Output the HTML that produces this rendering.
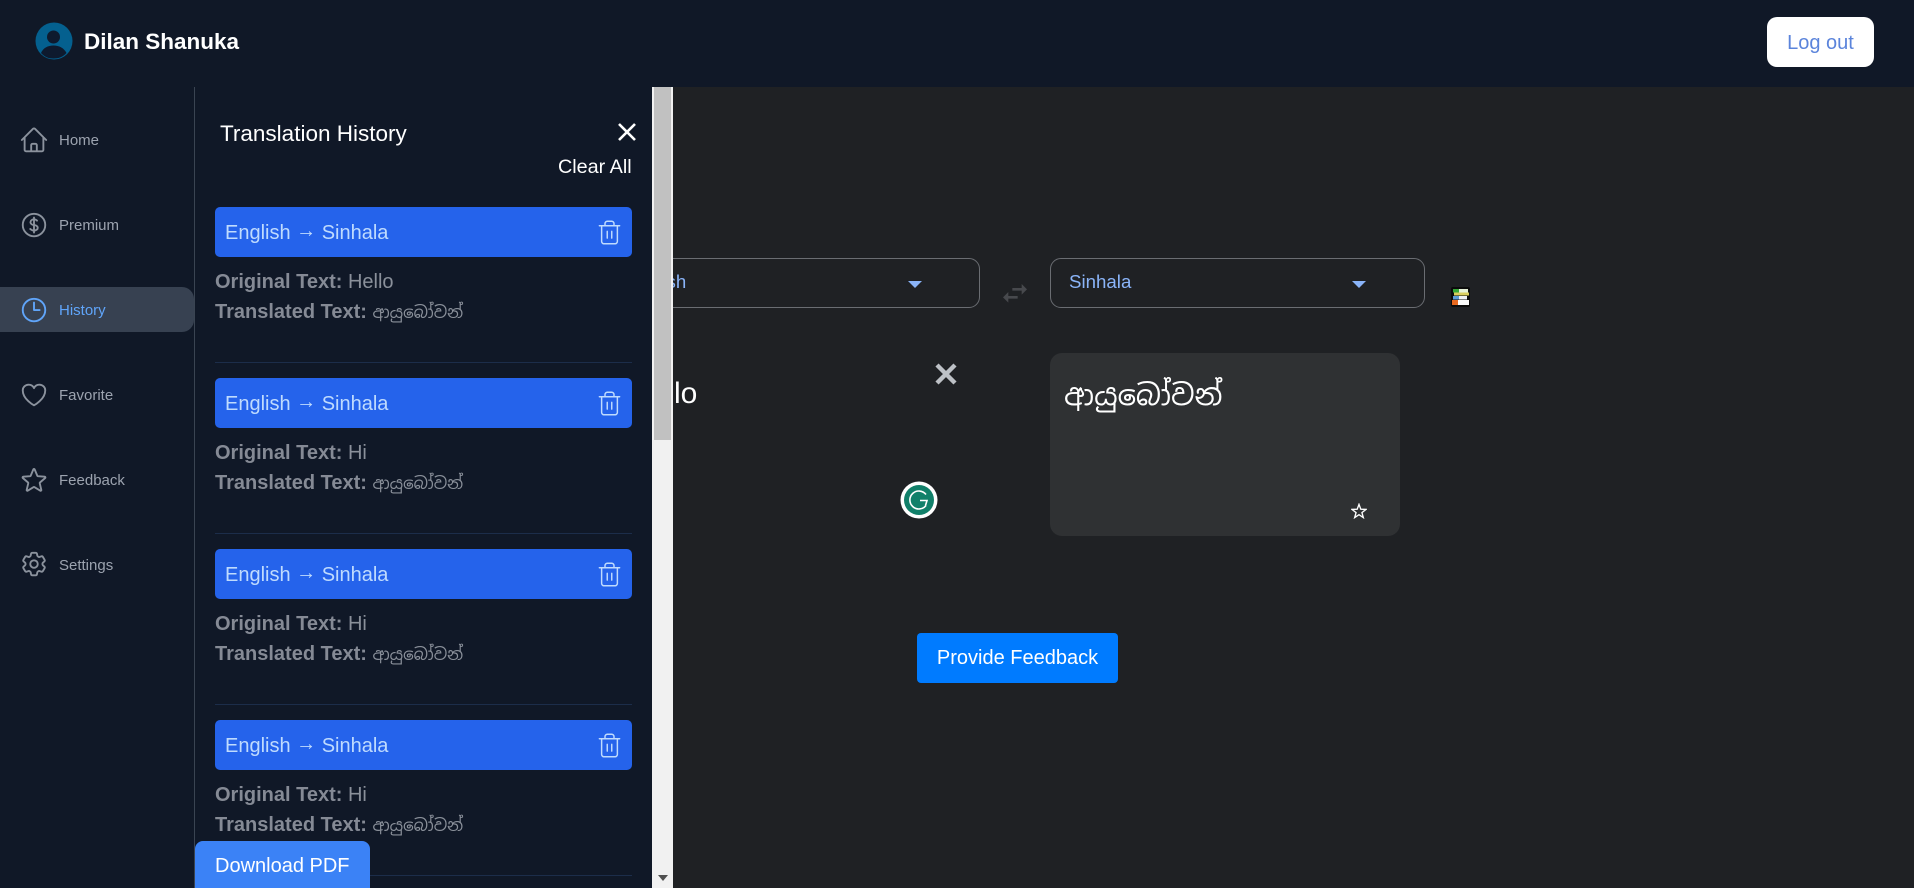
<!DOCTYPE html>
<html lang="en">
<head>
<meta charset="utf-8">
<title>Dilan Shanuka - Translator</title>
<style>
html,body{margin:0;padding:0;width:1914px;height:888px;overflow:hidden;background:#1f2124;font-family:"Liberation Sans",Arial,sans-serif}
#root{position:absolute;left:0;top:0;width:1914px;height:888px;overflow:hidden;contain:strict;background:#1f2124}
.a{position:absolute;white-space:nowrap}
#hdr{left:0;top:0;width:1914px;height:87px;background:#101827}
#side{left:0;top:87px;width:194px;height:801px;background:#101827}
#vline{left:194px;top:87px;width:1px;height:801px;background:#3a4452}
#panel{left:195px;top:87px;width:457px;height:801px;background:#101827;overflow:hidden}
.nav{left:59px;font-size:15px;line-height:20px;color:#9ca3af}
.ic{left:19px;width:30px;height:30px;fill:none;stroke:#8b929d;stroke-width:1.5;stroke-linecap:round;stroke-linejoin:round}
.card{left:215px;width:417px;height:50px;background:#2563eb;border-radius:5px}
.card span{position:absolute;left:10px;top:14px;font-size:20px;line-height:24px;color:#bfdbfe;white-space:nowrap}
.card span i{font-style:normal;position:relative;top:-2px}
.trash{position:absolute;left:381px;top:12px;width:27px;height:27px;fill:none;stroke:#bfdbfe;stroke-width:1.3;stroke-linecap:round;stroke-linejoin:round}
.ln{left:215px;font-size:20px;line-height:24px;color:#8a909a}
.ln b{color:#858a95}
.si{font-family:"Liberation Sans","Noto Sans Sinhala","Noto Serif Sinhala","Iskoola Pota",sans-serif;font-size:16.6px}
.sep{left:215px;width:417px;height:1px;background:#1c2d4a}
.sel{width:373px;height:48px;border:1px solid #6a6d72;border-radius:11px;background:#1f2124}
.sel span{position:absolute;top:11px;font-size:18.7px;line-height:24px;color:#8ab4f8}
.tri{position:absolute;top:22px;width:0;height:0;border-left:7px solid transparent;border-right:7px solid transparent;border-top:7px solid #8ab4f8}
</style>
</head>
<body>
<div id="root">
<div class="a" id="hdr"></div>
<svg class="a" style="left:35px;top:22px" width="38" height="38" viewBox="0 0 38 38">
  <circle cx="19" cy="19" r="18.5" fill="#04608f"/>
  <circle cx="18.5" cy="15" r="6.5" fill="#0e1a2e"/>
  <path d="M6 31c2-5 7-7.500 12.500-7.500S29 26 31.500 31C28 35 23.500 36.500 18.500 36.500S9.500 35 6 31Z" fill="#0e1a2e"/>
</svg>
<div class="a" style="left:84px;top:28px;font-size:22.5px;line-height:28px;font-weight:bold;color:#fff">Dilan Shanuka</div>
<div class="a" style="left:1767px;top:17px;width:107px;height:50px;background:#fff;border-radius:10px;text-align:center;font-size:20px;line-height:52px;color:#5b84db">Log out</div>

<!-- main -->
<div class="a sel" style="left:605px;top:258px"><span style="left:19px">English</span><i class="tri" style="left:302px"></i></div>
<svg class="a" style="left:1003px;top:284px" width="24" height="18.700" viewBox="3 5 18 14"><path fill="#47494d" d="M6.990 11L3 15l3.990 4v-3H14v-2H6.990v-3zM21 9l-3.990-4v3H10v2h7.010v3L21 9z"/></svg>
<div class="a sel" style="left:1050px;top:258px"><span style="left:18px">Sinhala</span><i class="tri" style="left:301px"></i></div>
<svg class="a" style="left:1451px;top:287px" width="19" height="20" viewBox="0 0 19 20">
  <rect x="0" y="0" width="19" height="20" rx="2" fill="#0b0b0b"/>
  <rect x="2" y="2" width="15" height="3.500" fill="#e6f2d8"/><rect x="2" y="2" width="6" height="3.500" fill="#35a836"/>
  <rect x="3" y="5.500" width="15" height="3" fill="#d9cf5e"/>
  <rect x="2" y="9" width="14" height="3.500" fill="#eef0f2"/><rect x="2" y="9" width="6" height="3.500" fill="#5b9bd5"/>
  <rect x="1" y="13" width="17" height="5" fill="#fafafa"/><rect x="1" y="13" width="6" height="5" fill="#e8691f"/>
</svg>
<div class="a" style="left:629px;top:376px;font-size:30px;line-height:36px;color:#fff;font-weight:500">Hello</div>
<svg class="a" style="left:935px;top:363px" width="22" height="22" viewBox="0 0 22 22" stroke="#bdc1c6" stroke-width="4.400"><path d="M2 2l18 18M20 2L2 20"/></svg>
<svg class="a" style="left:900px;top:481px" width="38" height="38" viewBox="0 0 38 38">
  <circle cx="19" cy="19" r="18.500" fill="#fff"/><circle cx="19" cy="19" r="15" fill="#11806a"/>
  <path d="M26 13.500A9 9 0 1 0 26 24.500" fill="none" stroke="#fff" stroke-width="1.600"/>
  <path d="M20 19.500h7l-1.500 5" fill="none" stroke="#fff" stroke-width="1.600"/>
</svg>
<div class="a" style="left:1050px;top:353px;width:350px;height:183px;background:#2f3133;border-radius:12px"></div>
<div class="a si" style="left:1064px;top:377px;font-size:29px;line-height:38px;color:#fff">ආයුබෝවන්</div>
<svg class="a" style="left:1351px;top:503px" width="16" height="16" viewBox="0 0 24 24" fill="none" stroke="#fff" stroke-width="2"><path d="M12 2l2.700 7.300 7.800.3-6.100 4.800 2.100 7.500-6.500-4.300-6.500 4.300 2.100-7.500L1.500 9.600l7.800-.3Z"/></svg>
<div class="a" style="left:917px;top:633px;width:201px;height:50px;background:#007bff;border-radius:4px;text-align:center;font-size:20px;line-height:50px;color:#fff">Provide Feedback</div>

<!-- sidebar -->
<div class="a" id="side"></div>
<div class="a" style="left:0;top:287px;width:194px;height:45px;background:#374151;border-radius:0 12px 12px 0"></div>
<svg class="a ic" style="top:125px" viewBox="0 0 24 24"><path d="m2.25 12 8.954-8.955c.44-.439 1.152-.439 1.591 0L21.750 12M4.500 9.750v10.125c0 .621.504 1.125 1.125 1.125H9.750v-4.875c0-.621.504-1.125 1.125-1.125h2.250c.621 0 1.125.504 1.125 1.125V21h4.125c.621 0 1.125-.504 1.125-1.125V9.750M8.250 21h8.250"/></svg>
<div class="a nav" style="top:131px">Home</div>
<svg class="a ic" style="top:210px" viewBox="0 0 24 24"><path d="M12 6v12m-3-2.818.879.659c1.171.879 3.070.879 4.242 0 1.172-.879 1.172-2.303 0-3.182C13.536 12.219 12.768 12 12 12c-.725 0-1.450-.220-2.003-.659-1.106-.879-1.106-2.303 0-3.182s2.900-.879 4.006 0l.415.330M21 12a9 9 0 1 1-18 0 9 9 0 0 1 18 0Z"/></svg>
<div class="a nav" style="top:216px">Premium</div>
<svg class="a ic" style="top:295px;stroke:#60a5fa" viewBox="0 0 24 24"><path d="M12 6v6h4.500m4.500 0a9 9 0 1 1-18 0 9 9 0 0 1 18 0Z"/></svg>
<div class="a nav" style="top:301px;color:#60a5fa">History</div>
<svg class="a ic" style="top:380px" viewBox="0 0 24 24"><path d="M21 8.250c0-2.485-2.099-4.500-4.688-4.500-1.935 0-3.597 1.126-4.312 2.733-.715-1.607-2.377-2.733-4.313-2.733C5.100 3.750 3 5.765 3 8.250c0 7.220 9 12 9 12s9-4.780 9-12Z"/></svg>
<div class="a nav" style="top:386px">Favorite</div>
<svg class="a ic" style="top:465px" viewBox="0 0 24 24"><path d="M11.480 3.499a.562.562 0 0 1 1.040 0l2.125 5.111a.563.563 0 0 0 .475.345l5.518.442c.499.040.701.663.321.988l-4.204 3.602a.563.563 0 0 0-.182.557l1.285 5.385a.562.562 0 0 1-.840.610l-4.725-2.885a.562.562 0 0 0-.586 0L6.982 20.540a.562.562 0 0 1-.840-.610l1.285-5.386a.562.562 0 0 0-.182-.557l-4.204-3.602a.562.562 0 0 1 .321-.988l5.518-.442a.563.563 0 0 0 .475-.345L11.480 3.500Z"/></svg>
<div class="a nav" style="top:471px">Feedback</div>
<svg class="a ic" style="top:549px" viewBox="0 0 24 24"><path d="M9.594 3.940c.090-.542.560-.940 1.110-.940h2.593c.550 0 1.020.398 1.110.940l.213 1.281c.063.374.313.686.645.870.074.040.147.083.220.127.325.196.720.257 1.075.124l1.217-.456a1.125 1.125 0 0 1 1.370.490l1.296 2.247a1.125 1.125 0 0 1-.260 1.431l-1.003.827c-.293.241-.438.613-.430.992a7.723 7.723 0 0 1 0 .255c-.008.378.137.750.430.991l1.004.827c.424.350.534.955.260 1.430l-1.298 2.247a1.125 1.125 0 0 1-1.369.491l-1.217-.456c-.355-.133-.750-.072-1.076.124a6.470 6.470 0 0 1-.220.128c-.331.183-.581.495-.644.869l-.213 1.281c-.090.543-.560.940-1.110.940h-2.594c-.550 0-1.019-.398-1.110-.940l-.213-1.281c-.062-.374-.312-.686-.644-.870a6.520 6.520 0 0 1-.220-.127c-.325-.196-.720-.257-1.076-.124l-1.217.456a1.125 1.125 0 0 1-1.369-.490l-1.297-2.247a1.125 1.125 0 0 1 .260-1.431l1.004-.827c.292-.240.437-.613.430-.991a6.932 6.932 0 0 1 0-.255c.007-.380-.138-.751-.430-.992l-1.004-.827a1.125 1.125 0 0 1-.260-1.430l1.297-2.247a1.125 1.125 0 0 1 1.370-.491l1.216.456c.356.133.751.072 1.076-.124.072-.044.146-.086.220-.128.332-.183.582-.495.644-.869l.214-1.280Z"/><path d="M15 12a3 3 0 1 1-6 0 3 3 0 0 1 6 0Z"/></svg>
<div class="a nav" style="top:556px">Settings</div>
<div class="a" id="vline"></div>

<!-- history panel -->
<div class="a" id="panel"></div>
<div class="a" style="left:220px;top:120px;font-size:22.500px;line-height:28px;color:#fff">Translation History</div>
<svg class="a" style="left:616px;top:121px" width="22" height="22" viewBox="0 0 22 22" stroke="#fff" stroke-width="2.600"><path d="M3 3l16 16M19 3L3 19"/></svg>
<div class="a" style="left:558px;top:155px;font-size:19.800px;line-height:24px;color:#fff">Clear All</div>

<div class="a card" style="top:207px"><span>English <i>→</i> Sinhala</span><svg class="trash" viewBox="0 0 24 24"><path d="M3 6h18M19 6v14c0 1-1 2-2 2H7c-1 0-2-1-2-2V6M8 6V4c0-1 1-2 2-2h4c1 0 2 1 2 2v2M10 11v6M14 11v6"/></svg></div>
<div class="a ln" style="top:270px"><b>Original Text:</b> Hello</div>
<div class="a ln" style="top:300px"><b>Translated Text:</b> <span class="si">ආයුබෝවන්</span></div>
<div class="a sep" style="top:362px"></div>

<div class="a card" style="top:378px"><span>English <i>→</i> Sinhala</span><svg class="trash" viewBox="0 0 24 24"><path d="M3 6h18M19 6v14c0 1-1 2-2 2H7c-1 0-2-1-2-2V6M8 6V4c0-1 1-2 2-2h4c1 0 2 1 2 2v2M10 11v6M14 11v6"/></svg></div>
<div class="a ln" style="top:441px"><b>Original Text:</b> Hi</div>
<div class="a ln" style="top:471px"><b>Translated Text:</b> <span class="si">ආයුබෝවන්</span></div>
<div class="a sep" style="top:533px"></div>

<div class="a card" style="top:549px"><span>English <i>→</i> Sinhala</span><svg class="trash" viewBox="0 0 24 24"><path d="M3 6h18M19 6v14c0 1-1 2-2 2H7c-1 0-2-1-2-2V6M8 6V4c0-1 1-2 2-2h4c1 0 2 1 2 2v2M10 11v6M14 11v6"/></svg></div>
<div class="a ln" style="top:612px"><b>Original Text:</b> Hi</div>
<div class="a ln" style="top:642px"><b>Translated Text:</b> <span class="si">ආයුබෝවන්</span></div>
<div class="a sep" style="top:704px"></div>

<div class="a card" style="top:720px"><span>English <i>→</i> Sinhala</span><svg class="trash" viewBox="0 0 24 24"><path d="M3 6h18M19 6v14c0 1-1 2-2 2H7c-1 0-2-1-2-2V6M8 6V4c0-1 1-2 2-2h4c1 0 2 1 2 2v2M10 11v6M14 11v6"/></svg></div>
<div class="a ln" style="top:783px"><b>Original Text:</b> Hi</div>
<div class="a ln" style="top:813px"><b>Translated Text:</b> <span class="si">ආයුබෝවන්</span></div>
<div class="a sep" style="top:875px"></div>

<div class="a" style="left:195px;top:841px;width:175px;height:47px;background:#3b82f6;border-radius:8px 8px 0 0;font-size:20px;line-height:50px;color:#fff;text-indent:20px">Download PDF</div>

<!-- scrollbar -->
<div class="a" style="left:652px;top:87px;width:21px;height:801px;background:#f1f1f1"></div>
<div class="a" style="left:654px;top:87px;width:17px;height:353px;background:#c1c1c1"></div>
<div class="a" style="left:658px;top:875px;width:0;height:0;border-left:5px solid transparent;border-right:5px solid transparent;border-top:6px solid #505050"></div>
</div>
</body>
</html>
